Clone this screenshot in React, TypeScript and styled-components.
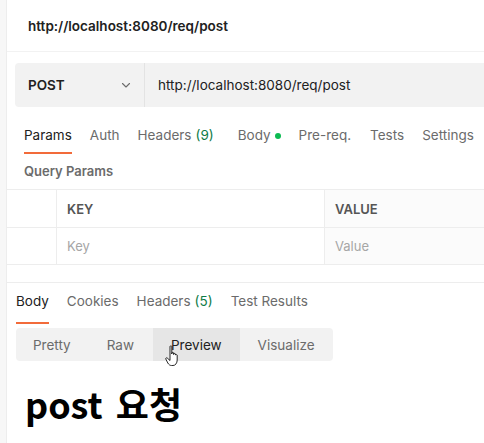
import React from 'react';
import styled, { createGlobalStyle } from 'styled-components';

const GlobalStyle = createGlobalStyle`
  html, body {
    margin: 0;
    padding: 0;
    background: #ffffff;
  }
  body {
    font-family: Inter, "Noto Sans", "Liberation Sans", sans-serif;
    color: #212121;
    overflow: hidden;
  }
`;

const Page = styled.div`
  display: flex;
  width: 484px;
  height: 443px;
  overflow: hidden;
  position: relative;
`;

const SideStrip = styled.div`
  flex: 0 0 6px;
  background: #f7f7f7;
  border-right: 1px solid #ededed;
`;

const Main = styled.div`
  flex: 1;
  display: flex;
  flex-direction: column;
  min-width: 0;
`;

const TitleBar = styled.div`
  height: 52px;
  display: flex;
  align-items: center;
  padding: 1px 0 0 21px;
  box-sizing: border-box;
  border-bottom: 1px solid #f2f2f2;
  font-size: 13.5px;
  font-weight: 600;
  color: #212121;
`;

const UrlBar = styled.div`
  display: flex;
  height: 44px;
  margin: 11px -20px 0 8px;
  background: #f2f2f2;
  border-radius: 4px;
  font-size: 13.5px;
`;

const Method = styled.div`
  flex: 0 0 130px;
  display: flex;
  align-items: center;
  justify-content: space-between;
  padding: 0 12px 0 13px;
  box-sizing: border-box;
  border-right: 1px solid #e3e3e3;
  font-weight: 600;
  color: #212121;
`;

const UrlText = styled.div`
  display: flex;
  align-items: center;
  padding-left: 13px;
  color: #212121;
`;

const TabRow = styled.div<{ $top: number; $left: number; $gap: number }>`
  display: flex;
  gap: ${p => p.$gap}px;
  margin-top: ${p => p.$top}px;
  padding-left: ${p => p.$left}px;
  font-size: 13.5px;
`;

const Tab = styled.div<{ $active?: boolean; $height: number; $lift?: number; $extra?: number }>`
  height: ${p => p.$height}px;
  display: flex;
  align-items: center;
  box-sizing: border-box;
  padding-bottom: ${p => p.$lift ?? 0}px;
  margin-left: ${p => p.$extra ?? 0}px;
  border-bottom: 2px solid ${p => (p.$active ? '#f26b3a' : 'transparent')};
  color: ${p => (p.$active ? '#212121' : '#6b6b6b')};
  white-space: nowrap;
`;

const Count = styled.span`
  color: #0f7b47;
  margin-left: 4px;
`;

const Dot = styled.span`
  width: 6px;
  height: 6px;
  border-radius: 50%;
  background: #0cbb52;
  margin-left: 4px;
  margin-top: 1px;
`;

const SectionLabel = styled.div`
  height: 24px;
  margin-top: 5px;
  display: flex;
  align-items: center;
  padding-left: 17px;
  font-size: 13px;
  font-weight: 600;
  color: #6b6b6b;
`;

const Table = styled.div`
  margin-top: 6px;
  display: grid;
  grid-template-columns: 50px 268px 1fr;
  border-top: 1px solid #ededed;
  border-bottom: 1px solid #ededed;
`;

const Cell = styled.div<{ $head?: boolean; $shade?: boolean; $bordered?: boolean }>`
  height: ${p => (p.$head ? 37 : 36)}px;
  display: flex;
  align-items: center;
  padding-left: 10px;
  font-size: 13px;
  font-weight: ${p => (p.$head ? 600 : 400)};
  color: ${p => (p.$head ? '#555555' : '#a6a6a6')};
  background: ${p => (p.$shade ? '#fbfbfb' : '#ffffff')};
  border-right: ${p => (p.$bordered ? '1px solid #ededed' : 'none')};
  border-bottom: ${p => (p.$head ? '1px solid #ededed' : 'none')};
`;

const ResponsePane = styled.div`
  margin-top: 17px;
  border-top: 1px solid #ededed;
  display: flex;
  flex-direction: column;
`;

const Segmented = styled.div`
  display: flex;
  align-self: flex-start;
  margin: 4px 0 0 9px;
  height: 33px;
  background: #f2f2f2;
  border-radius: 4px;
  overflow: hidden;
`;

const Segment = styled.div<{ $active?: boolean; $pad: number }>`
  display: flex;
  align-items: center;
  padding: 0 ${p => p.$pad}px;
  font-size: 13.5px;
  color: ${p => (p.$active ? '#212121' : '#6b6b6b')};
  background: ${p => (p.$active ? '#e6e6e6' : 'transparent')};
`;

const Preview = styled.div`
  margin: 22px 0 0 18px;
  font-family: "Noto Sans CJK KR", "Noto Sans", sans-serif;
  font-size: 36px;
  font-weight: 700;
  word-spacing: 5px;
  color: #000000;
  line-height: 40px;
`;

const Cursor = styled.svg`
  position: absolute;
  left: 165px;
  top: 345px;
`;

const Chevron = () => (
  <svg width="12" height="12" viewBox="0 0 12 12" fill="none">
    <path d="M2.5 4.5 L6 8 L9.5 4.5" stroke="#6b6b6b" strokeWidth="1.1" strokeLinecap="round" strokeLinejoin="round" />
  </svg>
);

export default function App() {
  return (
    <>
      <GlobalStyle />
      <Page>
        <SideStrip />
        <Main>
          <TitleBar>http://localhost:8080/req/post</TitleBar>
          <UrlBar>
            <Method>
              POST
              <Chevron />
            </Method>
            <UrlText>http://localhost:8080/req/post</UrlText>
          </UrlBar>
          <TabRow $top={11} $left={17} $gap={18}>
            <Tab $active $height={36}>Params</Tab>
            <Tab $height={36}>Auth</Tab>
            <Tab $height={36}>
              Headers<Count>(9)</Count>
            </Tab>
            <Tab $height={36} $extra={6}>
              Body<Dot />
            </Tab>
            <Tab $height={36}>Pre-req.</Tab>
            <Tab $height={36} $extra={1}>Tests</Tab>
            <Tab $height={36}>Settings</Tab>
          </TabRow>
          <SectionLabel>Query Params</SectionLabel>
          <Table>
            <Cell $head $bordered />
            <Cell $head $bordered>KEY</Cell>
            <Cell $head $shade>VALUE</Cell>
            <Cell $bordered />
            <Cell $bordered>Key</Cell>
            <Cell $shade>Value</Cell>
          </Table>
          <ResponsePane>
            <TabRow $top={0} $left={9} $gap={18}>
              <Tab $active $height={41} $lift={3}>Body</Tab>
              <Tab $height={41} $lift={3}>Cookies</Tab>
              <Tab $height={41} $lift={3}>
                Headers<Count>(5)</Count>
              </Tab>
              <Tab $height={41} $lift={3}>Test Results</Tab>
            </TabRow>
            <Segmented>
              <Segment $pad={17}>Pretty</Segment>
              <Segment $pad={19}>Raw</Segment>
              <Segment $active $pad={18}>Preview</Segment>
              <Segment $pad={18}>Visualize</Segment>
            </Segmented>
            <Preview>post 요청</Preview>
          </ResponsePane>
        </Main>
        <Cursor width="16" height="22" viewBox="0 0 16 22">
          <path
            d="M5 1.5 C5 0.7 6.8 0.7 6.8 1.5 L6.8 9 L6.8 8 C6.8 7.2 8.6 7.2 8.6 8 L8.6 9.5 L8.6 9 C8.6 8.2 10.4 8.2 10.4 9 L10.4 10 C10.4 9.4 12.2 9.4 12.2 10.2 L12.2 15 C12.2 18 10.5 20.5 8 20.5 L6.5 20.5 C4.8 20.5 3.8 19.5 2.8 18 L0.8 14 C0.4 13.2 1.4 12.4 2.2 13 L5 15.5 Z"
            fill="#ffffff"
            stroke="#111111"
            strokeWidth="0.9"
            strokeLinejoin="round"
          />
        </Cursor>
      </Page>
    </>
  );
}
